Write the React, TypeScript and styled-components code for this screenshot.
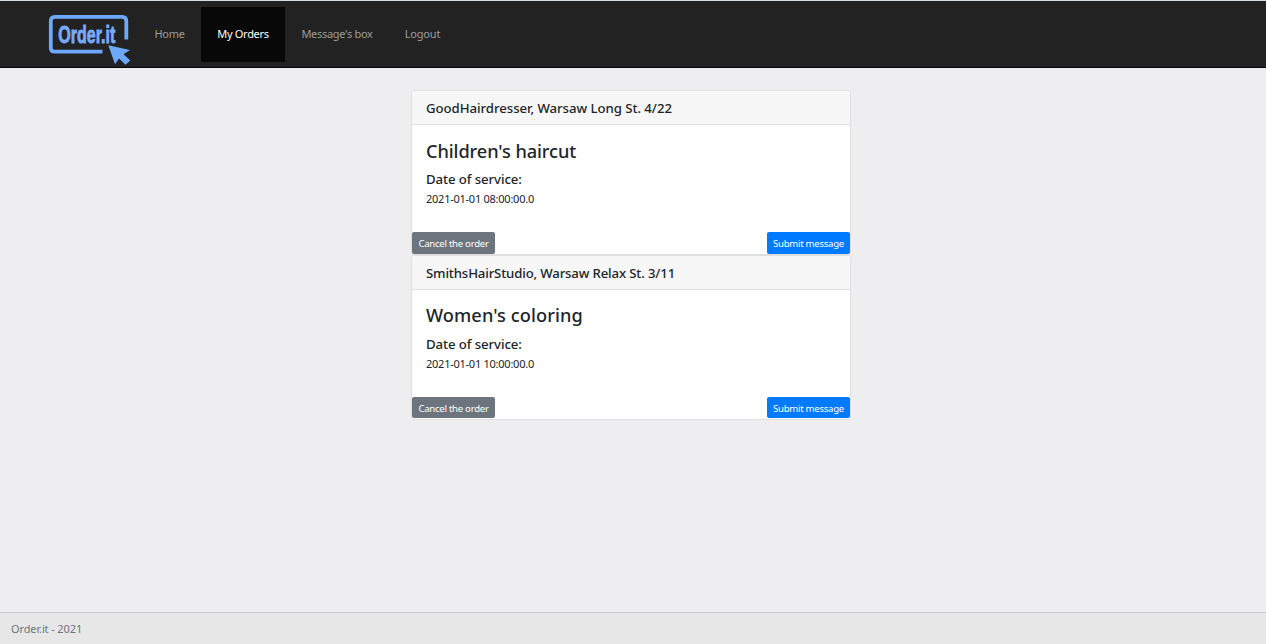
import React from "react";
import styled, { createGlobalStyle } from "styled-components";

const GlobalStyle = createGlobalStyle`
  * { box-sizing: border-box; }
  body {
    margin: 0;
    background: #eeeef0;
    color: #212529;
    font-family: "Segoe UI", "Noto Sans", "Open Sans", sans-serif;
    font-size: 11px;
  }
`;

const Page = styled.div`
  display: flex;
  flex-direction: column;
  height: 644px;
`;

const Navbar = styled.nav`
  display: flex;
  align-items: flex-start;
  height: 68px;
  padding: 6px 0 0 48px;
  background: #222;
  border-top: 1px solid #d9dcdf;
  border-bottom: 1px solid #080808;
`;

const Brand = styled.a`
  display: block;
  width: 90px;
  height: 60px;
`;

const NavItem = styled.a<{ $width: number; $track: number; $active?: boolean }>`
  display: flex;
  align-items: center;
  justify-content: center;
  width: ${(p) => p.$width}px;
  height: 55px;
  padding-bottom: 2px;
  white-space: nowrap;
  letter-spacing: ${(p) => p.$track}px;
  color: ${(p) => (p.$active ? "#fff" : "#9d9d9d")};
  background: ${(p) => (p.$active ? "#080808" : "transparent")};
`;

const Main = styled.main`
  flex: 1;
  display: flex;
  flex-direction: column;
  align-items: center;
  padding: 22px 4px 0 0;
`;

const Card = styled.article`
  display: flex;
  flex-direction: column;
  width: 440px;
  height: 165px;
  background: #fff;
  border: 1px solid #dfdfdf;
  border-radius: 3px;
`;

const CardHeader = styled.header<{ $track: number }>`
  height: 34px;
  padding: 0 14px;
  border-bottom: 1px solid #dfdfdf;
  border-radius: 2px 2px 0 0;
  background: #f7f7f7;
  font-size: 13.2px;
  font-weight: 500;
  line-height: 34px;
  letter-spacing: ${(p) => p.$track}px;
`;

const CardBody = styled.div`
  flex: 1;
  padding: 14px 14px 0;
`;

const Service = styled.h2<{ $track: number; $lift?: boolean }>`
  margin: ${(p) => (p.$lift ? "-1px 0 8px" : "0 0 7px")};
  font-size: 18.2px;
  font-weight: 500;
  line-height: 24px;
  letter-spacing: ${(p) => p.$track}px;
`;

const Label = styled.h3`
  margin: 0 0 2px;
  font-size: 13.2px;
  font-weight: 500;
  line-height: 18px;
  letter-spacing: -0.08px;
`;

const DateText = styled.p`
  margin: 0;
  line-height: 18px;
  letter-spacing: -0.25px;
`;

const Actions = styled.div`
  display: flex;
  justify-content: space-between;
  height: 22px;
`;

const Button = styled.button<{ $primary?: boolean; $height: number }>`
  width: 83px;
  height: ${(p) => p.$height}px;
  padding: 1px 0 0;
  border: 0;
  border-radius: 2px;
  background: ${(p) => (p.$primary ? "#007bff" : "#6c757d")};
  color: #fff;
  font-family: inherit;
  font-size: 9.6px;
  line-height: ${(p) => p.$height}px;
  letter-spacing: -0.27px;
  white-space: nowrap;
`;

const Footer = styled.footer`
  height: 32px;
  padding-left: 11px;
  border-top: 1px solid #c9c9c9;
  background: #e7e7e7;
  color: #6c757d;
  line-height: 32px;
  letter-spacing: -0.12px;
`;

const LogoArt = styled.svg`
  display: block;
  overflow: visible;
`;

const Logo = () => (
  <LogoArt width="90" height="60" viewBox="0 0 90 60" role="img" aria-label="Order.it">
    <path
      d="M54.5 44.7H6.5Q2.8 44.7 2.8 41V14Q2.8 9.8 7 9.8H74Q78.3 9.8 78.3 14V32.5"
      fill="none"
      stroke="#6ea8fb"
      strokeWidth="3.8"
    />
    <path d="M60.3 38.3L82 43L75.5 47.2L82.3 53.5L77.5 57.8L71 51.5L67 57.3Z" fill="#6ea8fb" />
    <text
      transform="translate(10.3 36.2) scale(0.655 1)"
      fill="#78aafa"
      stroke="#78aafa"
      strokeWidth="0.9"
      fontFamily="Liberation Sans, sans-serif"
      fontSize="24.5"
      fontWeight="700"
    >
      Order.it
    </text>
  </LogoArt>
);

const orders = [
  {
    place: "GoodHairdresser, Warsaw Long St. 4/22",
    placeTrack: -0.04,
    service: "Children's haircut",
    serviceTrack: -0.09,
    date: "2021-01-01 08:00:00.0",
    buttonHeight: 22,
  },
  {
    place: "SmithsHairStudio, Warsaw Relax St. 3/11",
    placeTrack: -0.15,
    service: "Women's coloring",
    serviceTrack: 0.09,
    date: "2021-01-01 10:00:00.0",
    buttonHeight: 21,
  },
];

export default function App() {
  return (
    <Page>
      <GlobalStyle />
      <Navbar>
        <Brand><Logo /></Brand>
        <NavItem $width={63} $track={-0.3}>Home</NavItem>
        <NavItem $width={84} $track={-0.3} $active>My Orders</NavItem>
        <NavItem $width={104} $track={-0.3}>Message's box</NavItem>
        <NavItem $width={67} $track={-0.2}>Logout</NavItem>
      </Navbar>
      <Main>
        {orders.map((o, i) => (
          <Card key={o.place}>
            <CardHeader $track={o.placeTrack}>{o.place}</CardHeader>
            <CardBody>
              <Service $track={o.serviceTrack} $lift={i > 0}>{o.service}</Service>
              <Label>Date of service:</Label>
              <DateText>{o.date}</DateText>
            </CardBody>
            <Actions>
              <Button $height={o.buttonHeight}>Cancel the order</Button>
              <Button $primary $height={o.buttonHeight}>Submit message</Button>
            </Actions>
          </Card>
        ))}
      </Main>
      <Footer>Order.it - 2021</Footer>
    </Page>
  );
}
